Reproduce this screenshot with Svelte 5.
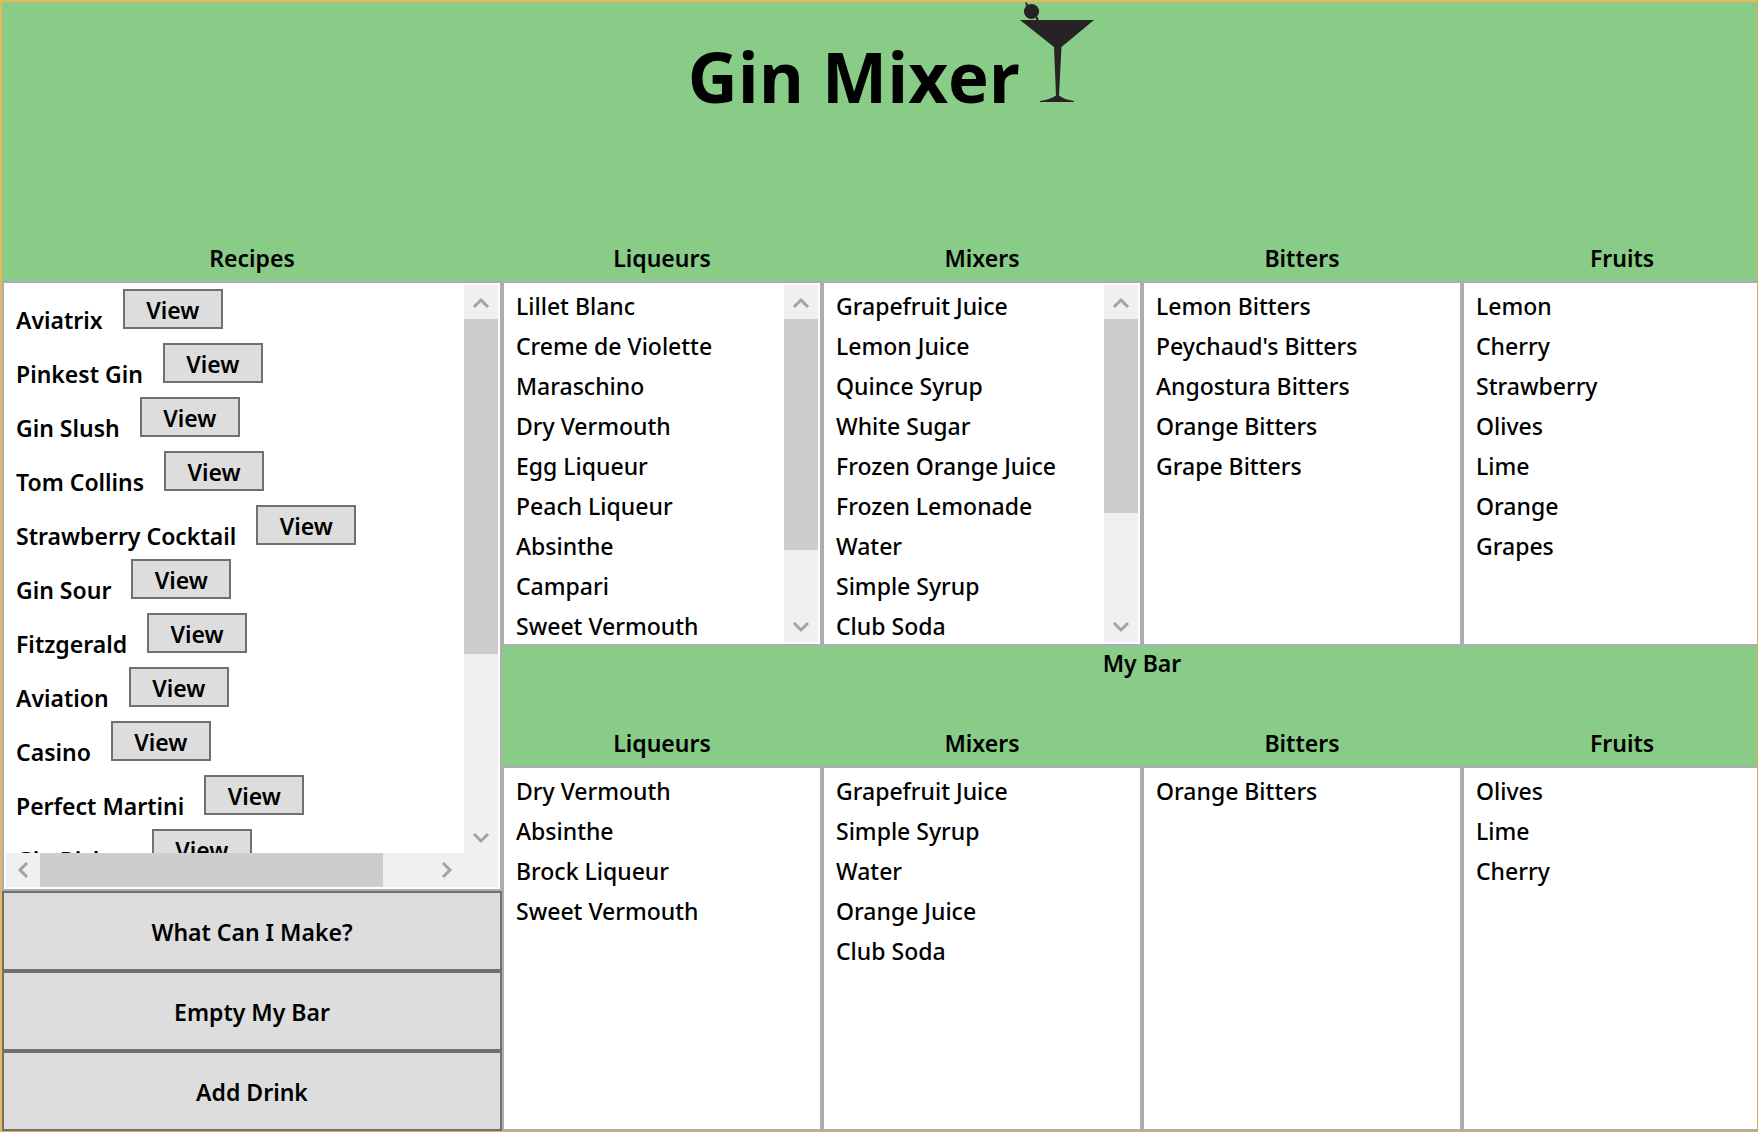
<script>
  const recipes = [
    'Aviatrix', 'Pinkest Gin', 'Gin Slush', 'Tom Collins', 'Strawberry Cocktail', 'Gin Sour',
    'Fitzgerald', 'Aviation', 'Casino', 'Perfect Martini', 'Gin Rickey'
  ];

  // thumb is the share of the scroll track that the thumb covers, in percent
  const shelf = [
    {
      title: 'Liqueurs',
      thumb: 80,
      items: ['Lillet Blanc', 'Creme de Violette', 'Maraschino', 'Dry Vermouth', 'Egg Liqueur',
        'Peach Liqueur', 'Absinthe', 'Campari', 'Sweet Vermouth']
    },
    {
      title: 'Mixers',
      thumb: 67,
      items: ['Grapefruit Juice', 'Lemon Juice', 'Quince Syrup', 'White Sugar', 'Frozen Orange Juice',
        'Frozen Lemonade', 'Water', 'Simple Syrup', 'Club Soda']
    },
    {
      title: 'Bitters',
      items: ['Lemon Bitters', "Peychaud's Bitters", 'Angostura Bitters', 'Orange Bitters', 'Grape Bitters']
    },
    {
      title: 'Fruits',
      items: ['Lemon', 'Cherry', 'Strawberry', 'Olives', 'Lime', 'Orange', 'Grapes']
    }
  ];

  const bar = [
    { title: 'Liqueurs', items: ['Dry Vermouth', 'Absinthe', 'Brock Liqueur', 'Sweet Vermouth'] },
    { title: 'Mixers', items: ['Grapefruit Juice', 'Simple Syrup', 'Water', 'Orange Juice', 'Club Soda'] },
    { title: 'Bitters', items: ['Orange Bitters'] },
    { title: 'Fruits', items: ['Olives', 'Lime', 'Cherry'] }
  ];

  const actions = ['What Can I Make?', 'Empty My Bar', 'Add Drink'];

  const chevrons = {
    up: 'M10 22 L17 15 L24 22',
    down: 'M10 15 L17 22 L24 15',
    left: 'M21 10 L14 17 L21 24',
    right: 'M13 10 L20 17 L13 24'
  };
</script>

{#snippet arrow(direction)}
  <button class="arrow" aria-label={`Scroll ${direction}`}>
    <svg viewBox="0 0 34 34" width="34" height="34"><path d={chevrons[direction]} /></svg>
  </button>
{/snippet}

{#snippet vertical(thumb)}
  <div class="scroll vertical">
    {@render arrow('up')}
    <div class="track"><div class="thumb" style:height={`${thumb}%`}></div></div>
    {@render arrow('down')}
  </div>
{/snippet}

{#snippet column(group)}
  <section class="column">
    <h2>{group.title}</h2>
    <div class="panel">
      <ul class="items">
        {#each group.items as item}<li>{item}</li>{/each}
      </ul>
      {#if group.thumb}{@render vertical(group.thumb)}{/if}
    </div>
  </section>
{/snippet}

<main>
  <div class="board">
    <header>
      <h1>Gin Mixer</h1>
      <svg class="glass" viewBox="0 0 76 100" width="76" height="100" aria-hidden="true">
        <path d="M5 0.5 L7 0.5 L8 3 L9 5 L7 6 Z M16 15 L18 15 L18.500 19 L16 19 Z" />
        <circle cx="11.500" cy="9.500" r="7.600" />
        <path d="M0 18 H74 L41.500 45 L39 93.500 Q44 97.500 54 99 V100 H20 V99 Q31 97 36 93.500 L34 45 Z" />
      </svg>
    </header>

    <div class="content">
      <aside>
        <h2>Recipes</h2>
        <div class="panel">
          <ul class="names">
            {#each recipes as recipe}
              <li><span>{recipe}</span><button class="view">View</button></li>
            {/each}
          </ul>
          {@render vertical(67)}
          <div class="scroll horizontal">
            {@render arrow('left')}
            <div class="track"><div class="thumb" style:width="88%"></div></div>
            {@render arrow('right')}
          </div>
          <div class="corner"></div>
        </div>
        {#each actions as action}
          <button class="action">{action}</button>
        {/each}
      </aside>

      <div class="stock">
        <div class="columns shelf">
          {#each shelf as group}{@render column(group)}{/each}
        </div>
        <h2 class="bar-title">My Bar</h2>
        <div class="columns bar">
          {#each bar as group}{@render column(group)}{/each}
        </div>
      </div>
    </div>
  </div>
</main>

<style>
  :global(body) {
    margin: 0;
  }

  main,
  main * {
    box-sizing: border-box;
  }

  main {
    display: flex;
    height: 100vh;
    min-height: 800px;
    overflow: hidden;
    border: 1px solid #d9ac55;
    border-top: 2px solid #e6b95f;
    border-left: 2px solid #e6b95f;
    background: #8c8;
    color: #000;
    font: 500 23px/34px 'Noto Sans', 'Open Sans', sans-serif;
  }

  /* The last column runs past the right edge of the window. */
  .board {
    display: flex;
    flex: none;
    flex-direction: column;
    width: calc(100% + 25px);
  }

  header {
    display: flex;
    flex: none;
    justify-content: center;
    height: 239px;
  }

  h1,
  h2,
  ul {
    margin: 0;
    padding: 0;
  }

  h1 {
    padding-top: 24px;
    font-family: 'Open Sans', 'Noto Sans', sans-serif;
    font-size: 69px;
    font-weight: 700;
    line-height: 100px;
  }

  h2 {
    flex: none;
    height: 40px;
    font-size: 23px;
    font-weight: 600;
    line-height: 34px;
    text-align: center;
  }

  .glass {
    flex: none;
    fill: #272324;
  }

  .content {
    display: grid;
    flex: 1;
    grid-template-columns: 25fr 64fr;
    min-height: 0;
  }

  aside,
  .stock,
  .column {
    display: flex;
    flex-direction: column;
    min-width: 0;
    min-height: 0;
  }

  .columns {
    display: grid;
    grid-template-columns: repeat(4, minmax(0, 1fr));
    grid-template-rows: minmax(0, 1fr);
    min-height: 0;
  }

  .shelf {
    flex: 1;
  }

  .bar-title {
    height: 80px;
  }

  .bar {
    flex: 1;
  }

  .panel {
    display: grid;
    flex: 1;
    grid-template-columns: minmax(0, 1fr) auto;
    grid-template-rows: minmax(0, 1fr) auto;
    min-height: 0;
    padding: 2px;
    border: 2px solid #acacb4;
    background: #fff;
  }

  ul {
    overflow: hidden;
    list-style: none;
  }

  .items {
    padding: 4px 0 0 10px;
  }

  .items li {
    height: 40px;
    white-space: nowrap;
  }

  .names {
    padding: 4px 0 0 10px;
    font-weight: 600;
  }

  .names li {
    display: flex;
    gap: 20px;
    height: 54px;
    white-space: nowrap;
  }

  .names span {
    padding-top: 14px;
  }

  button {
    padding: 2px 0 0;
    border: 2px solid #707070;
    border-radius: 0;
    background: #ddd;
    color: #000;
    font: inherit;
    font-weight: 600;
  }

  .view {
    width: 100px;
    height: 40px;
  }

  .action {
    flex: none;
    height: 80px;
  }

  .scroll {
    display: flex;
    background: #f0f0f0;
  }

  .vertical {
    flex-direction: column;
    width: 34px;
  }

  .horizontal {
    height: 34px;
  }

  .track {
    flex: 1;
    min-height: 0;
  }

  .thumb {
    width: 100%;
    height: 100%;
    background: #cdcdcd;
  }

  .corner {
    background: #f0f0f0;
  }

  .arrow {
    flex: none;
    width: 34px;
    height: 34px;
    padding: 0;
    border: 0;
    background: #f0f0f0;
  }

  .arrow svg {
    display: block;
    fill: none;
    stroke: #a3a3a3;
    stroke-width: 3;
  }
</style>
